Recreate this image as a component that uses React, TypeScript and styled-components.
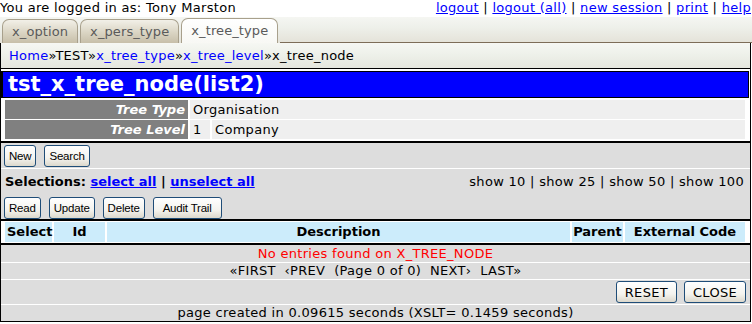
import styled, { createGlobalStyle } from "styled-components";

const GlobalStyle = createGlobalStyle`
    body {
        margin: 0;
        background: #ffffff;
        font-family: "DejaVu Sans", Verdana, sans-serif;
        font-size: 13px;
        letter-spacing: 0.3px;
        color: #000;
    }
`

const tabs = [
    { label: "x_option", active: false },
    { label: "x_pers_type", active: false },
    { label: "x_tree_type", active: true },
]

const columns = ["Select", "Id", "Description", "Parent", "External Code"]

const App = () => {
    return (
        <Page>
            <GlobalStyle />
            <TopBar>
                <span>You are logged in as: Tony Marston</span>
                <span>
                    <Link>logout</Link> | <Link>logout (all)</Link> | <Link>new session</Link> | <Link>print</Link> | <Link>help</Link>
                </span>
            </TopBar>

            <TabBar>
                {tabs.map((t) => (
                    <Tab key={t.label} $active={t.active}>{t.label}</Tab>
                ))}
                <TabFill />
            </TabBar>

            <Breadcrumb>
                <Link $plain>Home</Link>»TEST»<Link $plain>x_tree_type</Link>»<Link $plain>x_tree_level</Link>»x_tree_node
            </Breadcrumb>

            <Main>
                <Title>tst_x_tree_node(list2)</Title>

                <Outer>
                    <InfoRow>
                        <Label>Tree Type</Label>
                        <Value>Organisation</Value>
                    </InfoRow>
                    <InfoRow>
                        <Label>Tree Level</Label>
                        <Value $narrow>1</Value>
                        <Value>Company</Value>
                    </InfoRow>
                </Outer>

                <ActionBar>
                    <Button>New</Button>
                    <Button>Search</Button>
                </ActionBar>

                <SelectBar>
                    <SelectLine>
                        <b>Selections: <Link>select all</Link> | <Link>unselect all</Link></b>
                        <span>show 10 | show 25 | show 50 | show 100</span>
                    </SelectLine>
                    <ButtonRow>
                        <Button>Read</Button>
                        <Button>Update</Button>
                        <Button>Delete</Button>
                        <Button $wide>Audit Trail</Button>
                    </ButtonRow>
                </SelectBar>

                <ListHead>
                    {columns.map((c) => (
                        <HeadCell key={c}>{c}</HeadCell>
                    ))}
                </ListHead>

                <GreyRow $first>
                    <Message>No entries found on X_TREE_NODE</Message>
                </GreyRow>
                <GreyRow>«FIRST&nbsp; ‹PREV&nbsp; (Page 0 of 0)&nbsp; NEXT›&nbsp; LAST»</GreyRow>
                <GreyRow $right>
                    <BigButton>RESET</BigButton>
                    <BigButton>CLOSE</BigButton>
                </GreyRow>
                <GreyRow $last>page created in 0.09615 seconds (XSLT= 0.1459 seconds)</GreyRow>
            </Main>
        </Page>
    )
}

export default App;

const Page = styled.div`
    width: 752px;
`

const TopBar = styled.div`
    height: 16px;
    line-height: 15px;
    display: flex;
    justify-content: space-between;
    padding: 0 1px 0 0;
    white-space: nowrap;
`

    const Link = styled.a<{ $plain?: boolean }>`
        color: #0000ff;
        text-decoration: ${(p) => (p.$plain ? "none" : "underline")};
        cursor: pointer;
    `

const TabBar = styled.div`
    height: 26px;
    display: flex;
    align-items: flex-end;
    gap: 2px;
    padding-left: 2px;
    margin-top: 1px;
    background: linear-gradient(#f5f6f2, #eef0ea 40%, #e4e2d8);
`

    const Tab = styled.div<{ $active?: boolean }>`
        height: ${(p) => (p.$active ? "25px" : "24px")};
        box-sizing: border-box;
        padding: 0 9px;
        line-height: ${(p) => (p.$active ? "24px" : "23px")};
        letter-spacing: 0.1px;
        border: 1px solid #a8a08c;
        border-bottom: 0;
        border-radius: 7px 7px 0 0;
        color: #5a5a5a;
        background: ${(p) =>
            p.$active
                ? "linear-gradient(#ffffff, #f8f8f4)"
                : "linear-gradient(#f2f0e8, #d8d2c0 60%, #c7bfa9)"};
    `

    const TabFill = styled.div`
        flex: 1;
        align-self: stretch;
        border-bottom: 1px solid #7d6d58;
    `

const Breadcrumb = styled.div`
    height: 26px;
    line-height: 25px;
    padding-left: 8px;
    width: 751px;
    box-sizing: border-box;
    border: 1px solid #000;
    border-top: 0;
    letter-spacing: 0.25px;
    background: linear-gradient(#f6f7f3, #eef1ea 45%, #e5e6de);
`

const Main = styled.div`
    width: 751px;
    box-sizing: border-box;
    border: 1px solid #000;
    border-top: 0;
    padding-top: 2px;
    background: #ffffff;
`

const Title = styled.div`
    height: 25px;
    line-height: 25px;
    margin-right: 1px;
    border: 1px solid #000;
    border-left-width: 2px;
    background: #0000ff;
    color: #ffffff;
    font-weight: bold;
    font-size: 21px;
    letter-spacing: 0;
    padding-left: 5px;
`

const Outer = styled.div`
    display: flex;
    flex-direction: column;
    gap: 1px;
    padding: 2px 5px 2px 4px;
    border-bottom: 2px solid #000;
`

    const InfoRow = styled.div`
        display: flex;
        gap: 2px;
        height: 19px;
        line-height: 19px;
    `

    const Label = styled.div`
        width: 180px;
        flex: none;
        padding-right: 3px;
        text-align: right;
        background: #808080;
        color: #ffffff;
        font-style: italic;
        font-weight: bold;
        letter-spacing: 0;
    `

    const Value = styled.div<{ $narrow?: boolean }>`
        flex: ${(p) => (p.$narrow ? "none" : "1")};
        width: ${(p) => (p.$narrow ? "20px" : "auto")};
        box-sizing: border-box;
        padding-left: 3px;
        background: #efefef;
    `

const ActionBar = styled.div`
    height: 25px;
    display: flex;
    align-items: center;
    gap: 8px;
    padding-left: 3px;
    background: #dddddd;
    border-bottom: 1px solid #ffffff;
`

const Button = styled.button<{ $wide?: boolean }>`
    height: 22px;
    padding: 0 ${(p) => (p.$wide ? "9px" : "4px")};
    border: 1px solid #1f4d78;
    border-radius: 3px;
    background: linear-gradient(#ffffff, #f4f3ee 60%, #dcd8cc);
    font-family: "Liberation Sans", Arial, sans-serif;
    font-size: 11.5px;
    letter-spacing: -0.2px;
    color: #000;
`

const SelectBar = styled.div`
    background: #dddddd;
    padding: 4px 6px 0 3px;
    border-bottom: 2px solid #000;
    b {
        letter-spacing: 0;
    }
`

    const SelectLine = styled.div`
        display: flex;
        justify-content: space-between;
        line-height: 18px;
        padding-left: 1px;
        white-space: nowrap;
    `

    const ButtonRow = styled.div`
        display: flex;
        gap: 8px;
        margin-top: 6px;
    `

const ListHead = styled.div`
    display: grid;
    grid-template-columns: 47px 51px 463px 51px 1fr;
    gap: 2px;
    padding: 1px 5px 1px 4px;
    border-bottom: 2px solid #000;
`

    const HeadCell = styled.div`
        background: #ccecfb;
        font-weight: bold;
        letter-spacing: 0;
        text-align: center;
        height: 20px;
        line-height: 20px;
        white-space: nowrap;
        &:first-child {
            text-align: left;
            padding-left: 2px;
        }
    `

const GreyRow = styled.div<{ $right?: boolean; $last?: boolean; $first?: boolean }>`
    background: #dddddd;
    min-height: ${(p) => (p.$first ? "17px" : "16px")};
    line-height: ${(p) => (p.$first ? "17px" : "16px")};
    text-align: center;
    white-space: nowrap;
    border-bottom: ${(p) => (p.$last ? "0" : "1px solid #ffffff")};
    ${(p) =>
        p.$right &&
        `
        display: flex;
        justify-content: flex-end;
        gap: 7px;
        padding: 1px 4px 1px 0;
    `}
`

    const Message = styled.span`
        color: #ff0000;
    `

    const BigButton = styled.button`
        height: 22px;
        min-width: 60px;
        padding: 0 8px;
        border: 1px solid #1f4d78;
        border-radius: 3px;
        background: linear-gradient(#ffffff, #f4f3ee 60%, #dcd8cc);
        font-family: "DejaVu Sans", Verdana, sans-serif;
        font-size: 13px;
        letter-spacing: 0.3px;
        color: #000;
    `
